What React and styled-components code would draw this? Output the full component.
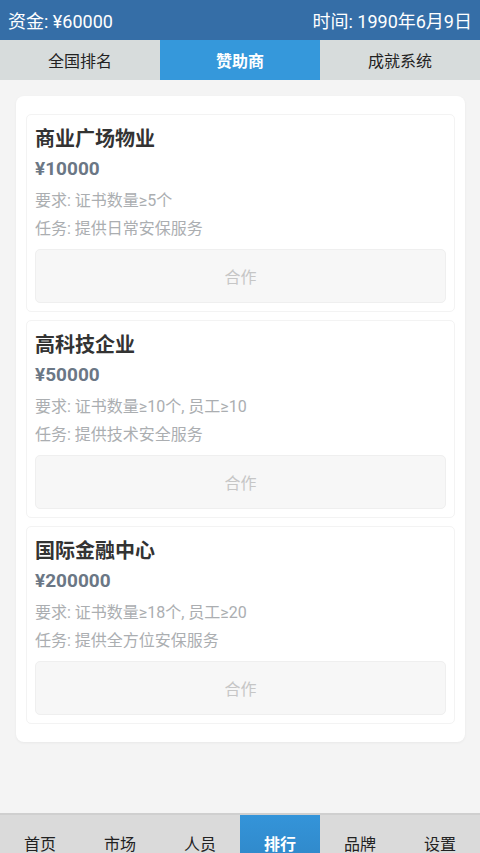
import React, { useState } from 'react';
import styled, { createGlobalStyle } from 'styled-components';

const Global = createGlobalStyle`
  html, body {
    margin: 0;
    padding: 0;
    height: 853px;
    overflow: hidden;
    background: #f4f4f4;
  }
  * { box-sizing: border-box; }
  body {
    font-family: Roboto, "Noto Sans CJK SC", "Noto Sans", sans-serif;
  }
`;

const Page = styled.div`
  display: flex;
  flex-direction: column;
  width: 480px;
  height: 871px;
`;

const Header = styled.div`
  display: flex;
  justify-content: space-between;
  align-items: center;
  height: 40px;
  padding: 0 8px 0 8px;
  background: #356ea7;
  color: #fff;
  font-size: 18px;
`;

const TabRow = styled.div`
  display: grid;
  grid-template-columns: repeat(3, 1fr);
  height: 40px;
  background: #d7dcdc;
`;

const Tab = styled.div`
  display: flex;
  align-items: center;
  justify-content: center;
  font-size: 16px;
  color: ${(p) => (p.active ? '#fff' : '#222')};
  font-weight: ${(p) => (p.active ? 700 : 400)};
  background: ${(p) => (p.active ? '#3598db' : 'transparent')};
`;

const Main = styled.div`
  flex: 1;
  padding: 16px 15px 0 16px;
  background: #f4f4f4;
`;

const Panel = styled.div`
  background: #fff;
  border-radius: 8px;
  padding: 18px 10px 18px 10px;
  display: flex;
  flex-direction: column;
  gap: 8px;
  box-shadow: 0 1px 3px rgba(0, 0, 0, 0.05);
`;

const Item = styled.div`
  border: 1px solid #f3f3f3;
  border-radius: 5px;
  padding: 10px 8px 8px 8px;
  display: flex;
  flex-direction: column;
`;

const Title = styled.div`
  font-size: 20px;
  font-weight: 700;
  color: #333;
  line-height: 28px;
`;

const Price = styled.div`
  font-size: 19px;
  font-weight: 700;
  color: #6b7785;
  line-height: 32px;
  margin-bottom: 2px;
`;

const Line = styled.div`
  font-size: 16px;
  color: #abaeb1;
  line-height: 28px;
`;

const Coop = styled.div`
  margin-top: 6px;
  height: 54px;
  border: 1px solid #efefef;
  border-radius: 5px;
  background: #f7f7f7;
  color: #c6c6c6;
  font-size: 16px;
  display: flex;
  align-items: center;
  justify-content: center;
`;

const Nav = styled.div`
  display: grid;
  grid-template-columns: repeat(6, 1fr);
  height: 58px;
  background: #dadada;
  border-top: 2px solid #cfcfcf;
`;

const NavItem = styled.div`
  display: flex;
  align-items: center;
  justify-content: center;
  font-size: 16px;
  color: ${(p) => (p.active ? '#fff' : '#222')};
  font-weight: ${(p) => (p.active ? 700 : 400)};
  background: ${(p) =>
    p.active ? 'linear-gradient(#3494d9, #2f86c6)' : 'transparent'};
`;

const sponsors = [
  { name: '商业广场物业', price: '¥10000', req: '证书数量≥5个', task: '提供日常安保服务' },
  { name: '高科技企业', price: '¥50000', req: '证书数量≥10个, 员工≥10', task: '提供技术安全服务' },
  { name: '国际金融中心', price: '¥200000', req: '证书数量≥18个, 员工≥20', task: '提供全方位安保服务' },
];

const tabs = ['全国排名', '赞助商', '成就系统'];
const navs = ['首页', '市场', '人员', '排行', '品牌', '设置'];

const App = () => {
  const [active, setActive] = useState(1);

  return (
    <Page>
      <Global />
      <Header>
        <span>资金: ¥60000</span>
        <span>时间: 1990年6月9日</span>
      </Header>
      <TabRow>
        {tabs.map((t, i) => (
          <Tab key={t} active={active === i} onClick={() => setActive(i)}>
            {t}
          </Tab>
        ))}
      </TabRow>
      <Main>
        <Panel>
          {sponsors.map((s) => (
            <Item key={s.name}>
              <Title>{s.name}</Title>
              <Price>{s.price}</Price>
              <Line>要求: {s.req}</Line>
              <Line>任务: {s.task}</Line>
              <Coop>合作</Coop>
            </Item>
          ))}
        </Panel>
      </Main>
      <Nav>
        {navs.map((n) => (
          <NavItem key={n} active={n === '排行'}>
            {n}
          </NavItem>
        ))}
      </Nav>
    </Page>
  );
};

export default App;
